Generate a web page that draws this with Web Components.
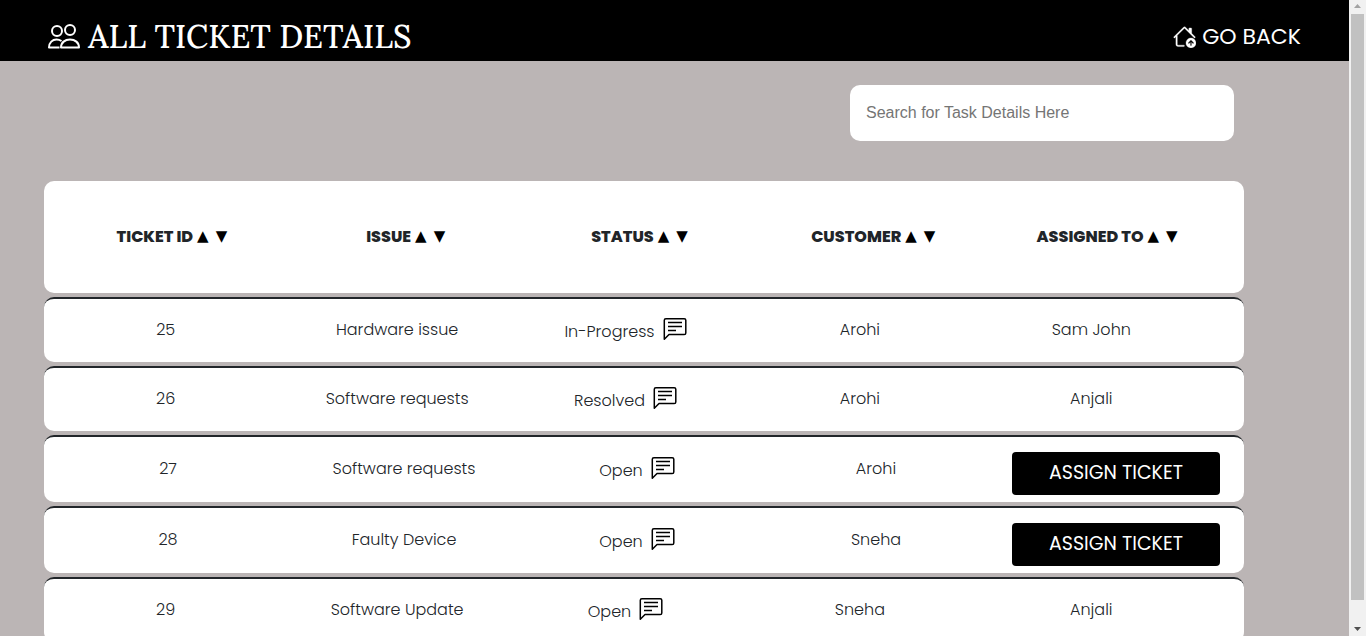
<!DOCTYPE html>
<html lang="en">
<head>
<meta charset="utf-8">
<meta name="viewport" content="width=device-width, initial-scale=1">
<title>All Ticket Details</title>
<style>
  html, body { margin: 0; height: 100%; overflow: hidden; }
  body { font: 16px/24px Poppins, Inter, sans-serif; color: #212529; background: #bbb5b5; }
</style>
</head>
<body>
<scroll-frame>
  <app-header>
    ALL TICKET DETAILS
    <span slot="action">GO BACK</span>
  </app-header>
  <ticket-search placeholder="Search for Task Details Here"></ticket-search>
  <ticket-table></ticket-table>
</scroll-frame>

<script>
class ShadowElement extends HTMLElement {
  connectedCallback() {
    if (this.shadowRoot) return;
    this.attachShadow({ mode: 'open' }).innerHTML = this.render();
  }
}

customElements.define('scroll-frame', class extends ShadowElement {
  render() {
    return `<style>
      :host { display: grid; grid-template-columns: minmax(0, 1fr) 17px; height: 100vh; }
      main { overflow: hidden; }
      .bar { display: flex; flex-direction: column; background: #f1f1f1; padding: 0 2px; }
      .arrow { flex: none; display: block; width: 13px; height: 14px; }
      .track { flex: 1; display: flex; flex-direction: column; }
      .thumb { flex: 27; background: #c1c1c1; }
      .rest { flex: 1; }
    </style>
    <main><slot></slot></main>
    <div class="bar" aria-hidden="true">
      <svg class="arrow" viewBox="0 0 13 14"><path d="M3 8 6.500 4 10 8z" fill="#a3a3a3"/></svg>
      <div class="track"><div class="thumb"></div><div class="rest"></div></div>
      <svg class="arrow" viewBox="0 0 13 14"><path d="M3 5h7L6.500 9z" fill="#505050"/></svg>
    </div>`;
  }
});

customElements.define('app-header', class extends ShadowElement {
  render() {
    return `<style>
      :host { display: block; background: #000; color: #fff; }
      header { display: flex; justify-content: space-between; align-items: center; height: 61px; padding: 12px 48px 0; box-sizing: border-box; }
      h1 { display: flex; align-items: center; gap: 8px; margin: 0; font: 500 32px/48px Lora, "Liberation Serif", serif; }
      a { display: flex; align-items: center; gap: 6px; color: inherit; text-decoration: none; font-size: 22px; line-height: 32px; }
      svg { display: block; flex: none; }
    </style>
    <header>
      <h1>
        <svg width="32" height="26" viewBox="0 0 32 26" fill="none" stroke="#fff" stroke-width="2" stroke-linejoin="round" aria-hidden="true">
          <circle cx="9" cy="7" r="5"/><circle cx="22" cy="6" r="5"/>
          <path d="M11.500 23.500H1c0-5 3.500-8 7.500-8 1.800 0 3.500.5 5 1.500"/>
          <path d="M13 23.500c0-5 4-8 9-8s9 3 9 8z"/>
        </svg>
        <span><slot></slot></span>
      </h1>
      <a href="#">
        <svg width="23" height="23" viewBox="0 0 16 16" fill="#fff" stroke="#fff" stroke-width="0.200" aria-hidden="true">
          <path d="M7.293 1.500a1 1 0 0 1 1.414 0L11 3.793V2.500a.5.5 0 0 1 .5-.5h1a.5.5 0 0 1 .5.5v3.293l2.354 2.353a.5.5 0 0 1-.708.708L8 2.207l-5 5V13.500a.5.5 0 0 0 .5.5h4a.5.5 0 0 1 0 1h-4A1.500 1.500 0 0 1 2 13.500V8.207l-.646.647a.5.5 0 1 1-.708-.708z"/>
          <path d="M12.500 16a3.500 3.500 0 1 0 0-7 3.500 3.500 0 0 0 0 7m.354-5.354 1.500 1.500a.5.5 0 0 1-.708.708L13 12.207V14a.5.5 0 0 1-1 0v-1.793l-.646.647a.5.5 0 0 1-.708-.708l1.500-1.500a.5.5 0 0 1 .708 0"/>
        </svg>
        <slot name="action"></slot>
      </a>
    </header>`;
  }
});

customElements.define('ticket-search', class extends ShadowElement {
  render() {
    return `<style>
      :host { display: flex; justify-content: flex-end; padding: 24px 115px 40px 44px; }
      input { width: 384px; max-width: 100%; height: 56px; box-sizing: border-box; border: 0; border-radius: 10px; padding: 0 16px; background: #fff; font: 16px "Liberation Sans", Arial, sans-serif; outline: none; }
      input::placeholder { color: #757575; opacity: 1; }
    </style>
    <input type="search" aria-label="${this.getAttribute('placeholder')}" placeholder="${this.getAttribute('placeholder')}">`;
  }
});

customElements.define('sort-heading', class extends ShadowElement {
  render() {
    return `<style>
      :host { display: inline-flex; align-items: center; gap: 4px; }
      .sort { display: flex; gap: 7px; padding-bottom: 2px; }
      button { border: 0; margin: 0; padding: 0; background: none; color: #000; font: 15px/24px "DejaVu Sans", sans-serif; }
    </style>
    <slot></slot>
    <span class="sort"><button aria-label="Sort ascending">▲</button><button aria-label="Sort descending">▼</button></span>`;
  }
});

customElements.define('ticket-status', class extends ShadowElement {
  render() {
    return `<style>
      :host { display: inline-flex; align-items: center; gap: 8px; padding-right: 6px; }
      .label { padding-top: 4px; }
      button { border: 0; margin: 0; padding: 0 0 2px; background: none; }
      svg { display: block; }
    </style>
    <span class="label"><slot></slot></span>
    <button aria-label="Comments"><svg width="24" height="24" viewBox="0 0 24 24" fill="none" stroke="#000">
      <path stroke-width="1.500" stroke-linejoin="round" d="M1.300 22.200V3.300Q1.300 1.700 2.900 1.700H21.200Q22.800 1.700 22.800 3.300V15.900Q22.800 17.500 21.200 17.500H6z"/>
      <path stroke-width="1.300" d="M5 5.500h14M5 9.500h14M5 13.500h8"/>
    </svg></button>`;
  }
});

const TICKETS = [
  ['25', 'Hardware issue', 'In-Progress', 'Arohi', 'Sam John'],
  ['26', 'Software requests', 'Resolved', 'Arohi', 'Anjali'],
  ['27', 'Software requests', 'Open', 'Arohi', null],
  ['28', 'Faulty Device', 'Open', 'Sneha', null],
  ['29', 'Software Update', 'Open', 'Sneha', 'Anjali'],
];

customElements.define('ticket-table', class extends ShadowElement {
  row([id, issue, status, customer, agent]) {
    return `<tr class="${agent ? '' : 'unassigned'}"><td>${id}</td><td>${issue}</td>
      <td><ticket-status>${status}</ticket-status></td><td>${customer}</td>
      <td>${agent || '<button class="assign">ASSIGN TICKET</button>'}</td></tr>`;
  }
  render() {
    return `<style>
      :host { display: block; margin: 0 105px 0 44px; }
      table, thead, tbody { display: flex; flex-direction: column; gap: 4px; }
      tr { display: grid; grid-template-columns: repeat(5, minmax(0, 1fr)); align-items: center; box-sizing: border-box;
           background: #fff; border-radius: 10px; text-align: center; }
      th, td { padding: 0; }
      thead tr { min-height: 112px; padding: 0 20px 0 11px; }
      th { font-weight: 800; }
      tbody tr { min-height: 65px; border-top: 2px solid #212529; padding: 0 37px 2px 6px; }
      td { font-weight: 300; }
      tbody tr.unassigned { padding: 5px 14px 7px 6px; }
      .assign { width: 208px; height: 43px; margin: 10px 0 0 8px; padding: 0 0 2px; border: 0; border-radius: 4px; background: #000; color: #fff;
                font: 400 19px/40px Poppins, Inter, sans-serif; vertical-align: top; }
      tr.unassigned td:last-child { line-height: 0; }
    </style>
    <table>
      <thead><tr>${['TICKET ID', 'ISSUE', 'STATUS', 'CUSTOMER', 'ASSIGNED TO'].map(h => `<th scope="col"><sort-heading>${h}</sort-heading></th>`).join('')}</tr></thead>
      <tbody>${TICKETS.map(t => this.row(t)).join('')}</tbody>
    </table>`;
  }
});
</script>
</body>
</html>
